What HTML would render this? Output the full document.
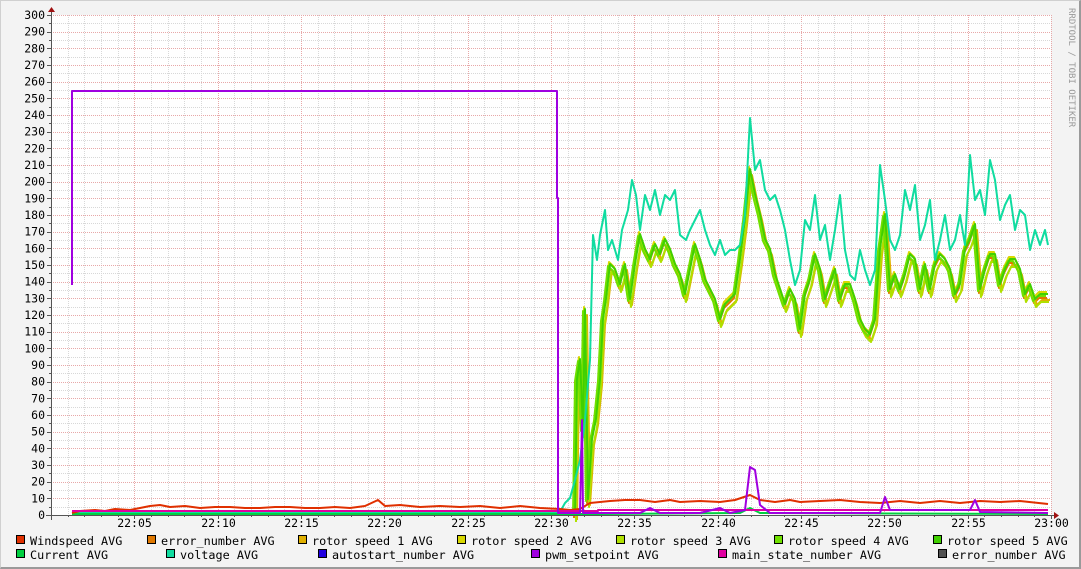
<!DOCTYPE html>
<html><head><meta charset="utf-8"><style>
html,body{margin:0;padding:0}
body{width:1081px;height:569px;background:#f3f3f3;overflow:hidden;position:relative}
.fr{position:absolute;left:0;top:0;border-top:1px solid #d0d0d0;border-left:1px solid #d0d0d0;border-right:2px solid #9a9a9a;border-bottom:2px solid #9a9a9a;box-sizing:border-box;width:1081px;height:569px}
svg{position:absolute;left:0;top:0}
text{font-family:"DejaVu Sans Mono","Liberation Mono",monospace}
</style></head><body>
<div class="fr"></div>
<svg id="s" width="1081" height="569" xmlns="http://www.w3.org/2000/svg">
<defs>
<polyline id="rot" points="575,515 577,380 580,360 583,430 585,310 588,500 592,440 596,420 600,380 603,320 606,300 610,265 615,270 620,285 625,265 630,300 635,265 640,235 645,250 650,260 655,245 660,255 665,240 670,250 675,265 680,275 685,295 690,270 695,245 700,260 705,280 710,290 715,300 720,320 725,305 730,300 735,295 740,260 745,220 750,170 755,195 760,215 765,240 770,250 775,275 780,290 785,305 790,290 795,300 800,330 805,295 810,280 815,255 820,270 825,300 830,285 835,270 840,300 845,285 850,285 855,300 860,320 865,330 870,335 875,320 880,250 885,215 890,290 895,275 900,290 905,275 910,255 915,260 920,290 925,265 930,290 935,265 940,255 945,260 950,270 955,295 960,285 965,250 970,240 975,225 980,290 985,270 990,255 995,255 1000,285 1005,270 1010,260 1015,260 1020,270 1025,295 1030,285 1035,300 1040,295 1048,295"/>
</defs>
<rect x="51" y="15" width="1000" height="500" fill="#fff"/>
<g id="grid"></g>
<g id="lab" font-size="11.5" fill="#000"></g>
<g fill="none" stroke-width="2" stroke-linejoin="round">
<use href="#rot" stroke="#e07800" transform="translate(-1,3)"/>
<use href="#rot" stroke="#e0b000" transform="translate(2,5)"/>
<use href="#rot" stroke="#d8d800" transform="translate(-1,-3)"/>
<use href="#rot" stroke="#b0e000" transform="translate(1,7)"/>
<use href="#rot" stroke="#70e000" transform="translate(-2,1)"/>
<use href="#rot" stroke="#40d000" transform="translate(0,-1)"/>
<polyline stroke="#10dca0" points="72,512 300,512 560,512 565,503 570,498 575,480 580,460 585,420 590,360 593,235 597,260 600,235 605,210 608,250 612,240 618,260 622,230 628,210 632,180 636,195 640,230 645,195 650,210 655,190 660,215 665,195 670,200 675,190 680,235 686,240 690,230 695,220 700,210 705,230 710,245 715,255 720,240 725,255 730,250 735,250 740,245 745,215 750,118 755,170 760,160 765,190 770,200 775,195 780,210 785,230 790,260 795,285 800,270 805,220 810,230 815,195 820,240 825,225 830,260 835,230 840,195 845,250 850,275 855,280 860,250 865,270 870,285 875,270 880,165 885,200 890,240 895,250 900,235 905,190 910,210 915,185 920,240 925,225 930,200 935,260 940,240 945,215 950,250 955,240 960,215 965,245 970,155 975,200 980,190 985,215 990,160 995,180 1000,220 1005,205 1010,195 1015,230 1020,210 1025,215 1030,250 1035,230 1040,245 1045,230 1048,245"/>
<polyline stroke="#00d040" points="72,514 560,514 600,514 740,513 750,508 760,513 1048,514"/>
<polyline stroke="#e03000" points="72,513 80,511 95,510 105,511 115,509 130,510 140,508 150,506 160,505 170,507 185,506 200,508 215,507 230,507 245,508 260,508 275,507 290,507 305,508 320,508 335,507 350,508 365,506 378,500 385,506 400,505 420,507 440,506 460,507 480,506 500,508 520,506 540,508 560,509 570,510 580,509 590,503 600,502 610,501 625,500 640,500 655,502 670,500 680,502 700,501 720,502 735,500 750,495 760,500 775,502 790,500 800,502 820,501 840,500 860,502 880,503 900,501 920,503 940,501 960,503 980,501 1000,502 1020,501 1048,504"/>
<polyline stroke="#e000a0" points="72,511 598,511 598,510 1048,510"/>
<polyline stroke="#a000e0" points="72,285 72,91 557,91 557,198 558,198 558,513 580,513 582,420 583,513 600,513 640,513 650,508 660,513 700,513 720,508 730,513 745,510 750,467 755,470 760,505 770,513 880,513 885,497 890,510 970,510 975,500 980,512 1048,513"/>
</g>
<g stroke="#555" stroke-width="1">
<line x1="46" y1="515.5" x2="1055" y2="515.5"/>
<line x1="51.5" y1="520" x2="51.5" y2="11"/>
</g>
<polygon points="48,12 55,12 51.5,7" fill="#a01010"/>
<polygon points="1054,512 1054,519 1059,515.5" fill="#a01010"/>
<text x="1069" y="8" font-size="9" fill="#999" transform="rotate(90 1069 8)">RRDTOOL / TOBI OETIKER</text>
<g font-size="11.8" fill="#000" id="leg"></g>
</svg>
<script>
var ns="http://www.w3.org/2000/svg",g=document.getElementById('grid'),lab=document.getElementById('lab'),leg=document.getElementById('leg');
function el(p,t,a,txt){var e=document.createElementNS(ns,t);for(var k in a)e.setAttribute(k,a[k]);if(txt)e.textContent=txt;p.appendChild(e);return e;}
for(var i=1;i<=60;i++){var x=Math.round(51+i*16.667)+0.5;var maj=i%5==0;
el(g,'line',{x1:x,y1:15,x2:x,y2:515,stroke:maj?'#e8a8a8':'#d8d8d8','stroke-dasharray':'1,1'});
el(g,'line',{x1:x,y1:515,x2:x,y2:maj?519:517,stroke:'#555'});
if(maj){var s=i==60?'23:00':'22:'+(i<10?'0'+i:''+i);el(lab,'text',{x:x,y:527,'text-anchor':'middle'},s);}}
for(var v=5;v<=300;v+=5){var y=Math.round(515-v*500/300)+0.5;var maj=v%10==0;
el(g,'line',{x1:51,y1:y,x2:1051,y2:y,stroke:maj?'#e8a8a8':'#d8d8d8','stroke-dasharray':'1,1'});
el(g,'line',{x1:maj?47:49,y1:y,x2:51,y2:y,stroke:'#555'});}
for(var v=0;v<=300;v+=10){var y=515-v*500/300;el(lab,'text',{x:45,y:y+4,'text-anchor':'end'},''+v);}
var L=[[16,541,'#e03000','Windspeed AVG'],[147,541,'#e07800','error_number AVG'],[298,541,'#e0b000','rotor speed 1 AVG'],[457,541,'#d8d800','rotor speed 2 AVG'],[616,541,'#b0e000','rotor speed 3 AVG'],[774,541,'#70e000','rotor speed 4 AVG'],[933,541,'#40d000','rotor speed 5 AVG'],
[16,555,'#00d040','Current AVG'],[166,555,'#10dca0','voltage AVG'],[318,555,'#2000e0','autostart_number AVG'],[531,555,'#a000e0','pwm_setpoint AVG'],[718,555,'#e000a0','main_state_number AVG'],[938,555,'#505050','error_number AVG']];
L.forEach(function(a){el(leg,'rect',{x:a[0]+0.5,y:a[1]-5.5,width:8,height:8,fill:a[2],stroke:'#000'});el(leg,'text',{x:a[0]+14,y:a[1]+4},a[3]);});
</script>
</body></html>
